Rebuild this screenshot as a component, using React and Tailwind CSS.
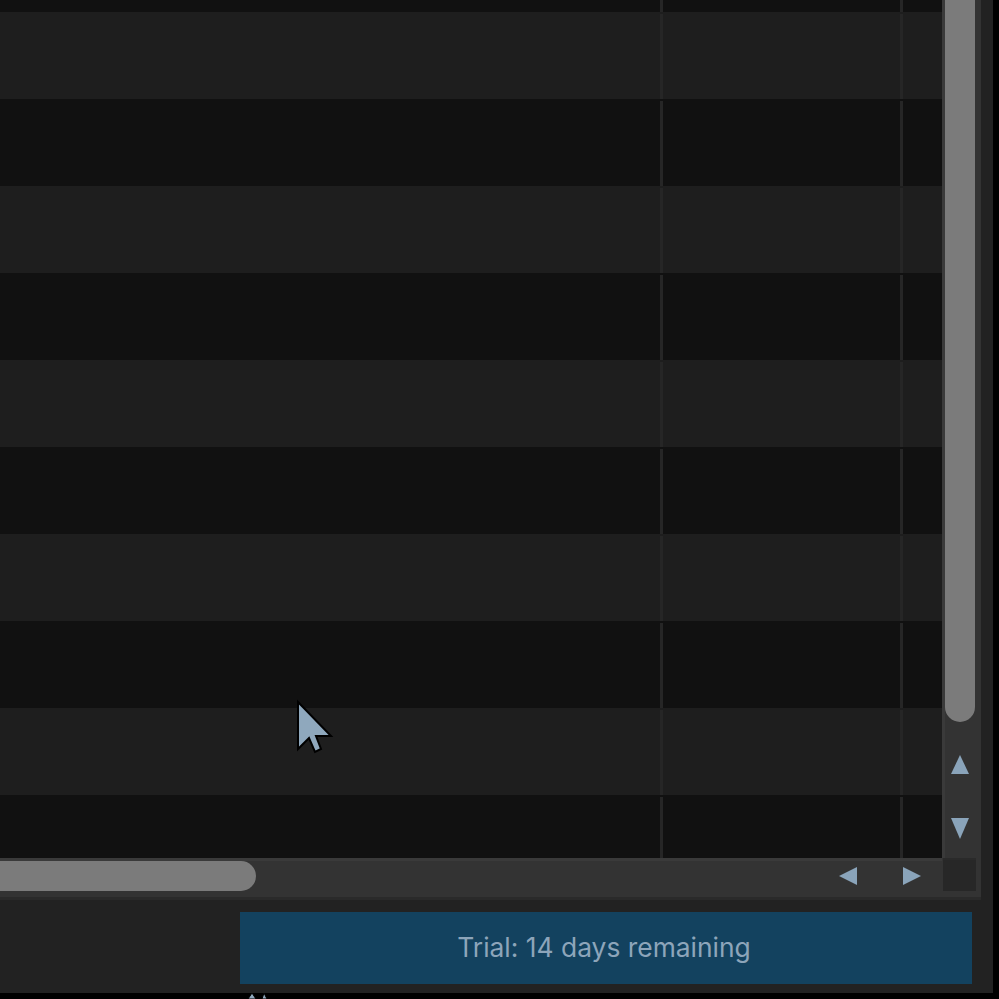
import React from 'react';

const rows = [
  { h: 'h-[12px]', light: false },
  { h: 'h-[87px]', light: true },
  { h: 'h-[87px]', light: false },
  { h: 'h-[87px]', light: true },
  { h: 'h-[87px]', light: false },
  { h: 'h-[87px]', light: true },
  { h: 'h-[87px]', light: false },
  { h: 'h-[87px]', light: true },
  { h: 'h-[87px]', light: false },
  { h: 'h-[87px]', light: true },
  { h: 'h-[63px]', light: false },
];

const Row = ({ h, light, first }) => (
  <div className={`flex ${h} ${light ? 'bg-[#1e1e1e]' : 'bg-[#111111]'}`}>
    <div className="w-[660px]" />
    <div className={`w-[3px] bg-[#262626] ${first ? '' : 'mt-[2px]'}`} />
    <div className="w-[237px]" />
    <div className={`w-[3px] bg-[#262626] ${first ? '' : 'mt-[2px]'}`} />
    <div className="flex-1" />
  </div>
);

const Pointer = () => (
  <svg className="absolute left-[290px] top-[695px]" width="50" height="65" viewBox="0 0 50 65">
    <polygon
      points="8,7 8,54 19,43 25,57 31,54 26,41 41,41"
      fill="#8fa8bd"
      stroke="#000"
      strokeWidth="2"
      strokeLinejoin="miter"
    />
  </svg>
);

const App = () => {
  return (
    <div className="relative w-[999px] h-[999px] bg-black overflow-hidden" style={{ fontFamily: 'Inter, "Liberation Sans", sans-serif' }}>
      <div className="w-[993px] h-[993px] bg-[#222222] flex flex-col">
        <div className="w-[981px] h-[897px] grid grid-cols-[942px_39px] grid-rows-[858px_39px] bg-[#333333]">
          {/* table */}
          <div className="flex flex-col overflow-hidden">
            {rows.map((r, i) => (
              <Row key={i} h={r.h} light={r.light} first={i === 0} />
            ))}
          </div>

          {/* vertical scrollbar */}
          <div className="flex flex-col bg-[#333333] border-l-[3px] border-[#3a3a3a]">
            <div className="w-[30px] h-[722px] bg-[#7b7b7b] rounded-b-[15px]" />
            <div className="flex flex-col items-center pr-[6px]">
              <svg className="mt-[33px]" width="18" height="19" viewBox="0 0 18 19">
                <polygon points="9,0 18,19 0,19" fill="#8aa4ba" />
              </svg>
              <svg className="mt-[44px]" width="18" height="21" viewBox="0 0 18 21">
                <polygon points="0,0 18,0 9,21" fill="#8aa4ba" />
              </svg>
            </div>
          </div>

          {/* horizontal scrollbar */}
          <div className="relative bg-[#333333] border-t-[3px] border-[#3a3a3a]">
            <div className="w-[256px] h-[30px] bg-[#7b7b7b] rounded-r-[15px]" />
            <svg className="absolute left-[839px] top-[6px]" width="18" height="18" viewBox="0 0 18 18">
              <polygon points="18,0 18,18 0,9" fill="#8aa4ba" />
            </svg>
            <svg className="absolute left-[903px] top-[6px]" width="18" height="18" viewBox="0 0 18 18">
              <polygon points="0,0 18,9 0,18" fill="#8aa4ba" />
            </svg>
          </div>

          {/* corner */}
          <div className="bg-[#333333] pl-[1px]">
            <div className="w-[33px] h-[33px] bg-[#272727] border-t-[2px] border-[#2a2a2a]" />
          </div>
        </div>

        <div className="h-[3px] bg-[#2a2a2a] w-[981px]" />

        <div className="flex pl-[240px] pt-[12px]">
          <div className="w-[732px] h-[72px] bg-[#13425f] flex items-center justify-center pr-[4px]">
            <span className="text-[26.4px] text-[#8da5ba]">Trial: 14 days remaining</span>
          </div>
        </div>
      </div>

      <Pointer />

      <svg className="absolute left-[246px] top-[992px]" width="24" height="7" viewBox="0 0 24 7">
        <polygon points="2,7 6,1 10,7" fill="#8fa8bd" stroke="#000" strokeWidth="1" />
        <polygon points="16,7 18,1 21,7" fill="#8fa8bd" stroke="#000" strokeWidth="1" />
      </svg>
    </div>
  );
};

export default App;
